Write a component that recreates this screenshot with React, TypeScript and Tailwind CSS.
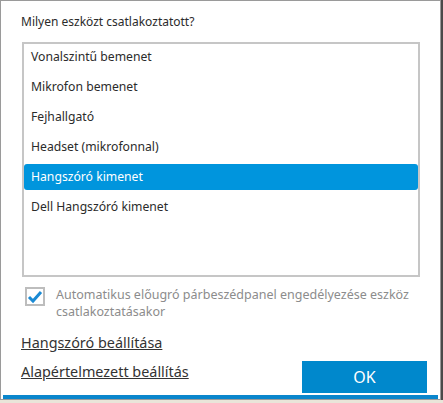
const devices = [
  "Vonalszintű bemenet",
  "Mikrofon bemenet",
  "Fejhallgató",
  "Headset (mikrofonnal)",
  "Hangszóró kimenet",
  "Dell Hangszóró kimenet",
];

const selected = "Hangszóró kimenet";

const App = () => {
  return (
    <div
      className="w-[443px] h-[403px] flex flex-col bg-[#e9e5d9] overflow-hidden"
      style={{ fontFamily: '"Noto Sans", "Open Sans", sans-serif' }}
    >
      <div className="flex h-[400px]">
        <div className="w-[441px] h-[400px] flex flex-col bg-white border border-[#9a9a9a]">
          <div className="flex flex-col pl-[20px] pr-[13px]">
            <p className="mt-[12px] text-[12px] leading-[18px] text-[#2b2b2b]">
              Milyen eszközt csatlakoztatott?
            </p>

            <div className="mt-[11px] ml-[1px] w-[398px] h-[235px] border-2 border-[#c6c6c6]">
              {devices.map((name) => (
                <div
                  key={name}
                  className={
                    name === selected
                      ? "h-[26px] mb-[4px] pl-[7px] flex items-center rounded-[3px] bg-[#0095dd] text-white text-[12.2px]"
                      : "h-[26px] mb-[4px] pl-[7px] flex items-center text-[#2b2b2b] text-[12.2px]"
                  }
                >
                  {name}
                </div>
              ))}
            </div>

            <div className="mt-[10px] ml-[4px] flex items-start">
              <div className="w-[20px] h-[19px] shrink-0 border-2 border-[#bdbdbd] flex items-center justify-center">
                <svg width="16" height="14" viewBox="0 0 16 14">
                  <polyline
                    points="2,7 6,11 14,2"
                    fill="none"
                    stroke="#1a8ad4"
                    strokeWidth="3"
                  />
                </svg>
              </div>
              <p className="ml-[11px] -mt-[1px] text-[12.5px] leading-[17px] text-[#8c8c8c]">
                Automatikus előugró párbeszédpanel engedélyezése eszköz
                <br />
                csatlakoztatásakor
              </p>
            </div>

            <a className="mt-[13px] self-start text-[14.4px] leading-[20px] text-[#333] underline">
              Hangszóró beállítása
            </a>

            <div className="mt-[8px] flex justify-between items-start">
              <a className="mt-[1px] text-[14.4px] leading-[20px] text-[#333] underline">
                Alapértelmezett beállítás
              </a>
              <button className="w-[125px] h-[32px] bg-[#0088cc] text-white text-[16px]">
                OK
              </button>
            </div>
          </div>

          <div className="mt-auto mx-[2px] h-[4px] bg-[#0a86cc]" />
        </div>
        <div className="flex-1 bg-[#4a4a4a]" />
      </div>
    </div>
  );
};

export default App;
